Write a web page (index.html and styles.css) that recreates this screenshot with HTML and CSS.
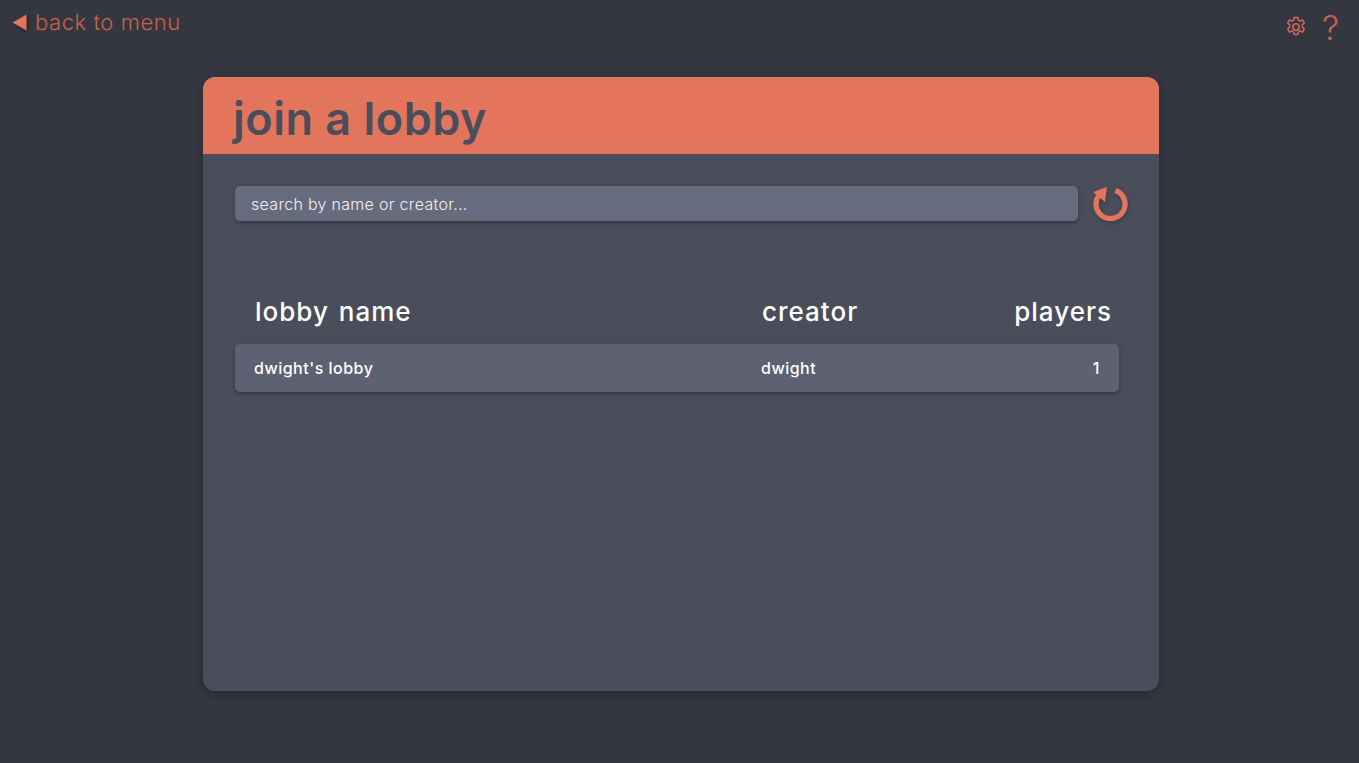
FILE: index.html
```html
<!DOCTYPE html>
<html lang="en">

<head>
    <meta charset="UTF-8">
    <meta name="viewport" content="width=device-width, initial-scale=1.0">
    <title>join a lobby</title>
    <link rel="stylesheet" href="styles.css">
</head>

<body>

    <div class="topbar">
        <a class="back-link">
            <svg class="back-arrow" width="15" height="17" viewBox="0 0 15 17">
                <path d="M14.5 0.5V16.5L0.5 8.5Z" fill="#e2755c" />
            </svg>
            <span>back to menu</span>
        </a>
        <div class="top-icons">
            <svg class="gear" width="22" height="22" viewBox="0 0 22 22" fill="none" stroke="#d0685a" stroke-width="1.5" stroke-linejoin="round">
                <circle cx="11" cy="11" r="3.2" />
                <path d="M9.2 1.5h3.6l.5 2.6 1.8.9 2.4-1.1 1.9 3.2-2 1.6v2.600l2 1.600-1.900 3.200-2.400-1.100-1.800.9-.5 2.600H9.200l-.5-2.600-1.800-.9-2.400 1.100-1.900-3.200 2-1.600V8.700l-2-1.600 1.900-3.200 2.400 1.100 1.800-.9z" />
            </svg>
            <span class="help">?</span>
        </div>
    </div>

    <div class="card">
        <div class="card-head">
            <h1>join a lobby</h1>
        </div>
        <div class="card-body">
            <div class="search-row">
                <input class="search" type="text" placeholder="search by name or creator...">
                <svg class="refresh" width="36" height="35" viewBox="0 0 36 35" fill="none">
                    <path d="M6.500 8.600A14.500 14.500 0 1 0 22.500 4.400" stroke="#e2755c" stroke-width="5.300" />
                    <path d="M0 6L14 1L12 16Z" fill="#e2755c" />
                </svg>
            </div>

            <div class="lobby-head">
                <span class="col-name">lobby name</span>
                <span class="col-creator">creator</span>
                <span class="col-players">players</span>
            </div>
            <div class="lobby-row">
                <span class="col-name">dwight's lobby</span>
                <span class="col-creator">dwight</span>
                <span class="col-players">1</span>
            </div>
        </div>
    </div>

</body>

</html>
```

FILE: styles.css
```css
* {
    margin: 0;
    padding: 0;
    box-sizing: border-box;
}

body {
    height: 100vh;
    overflow: hidden;
    background-color: #343740;
    font-family: "Inter", "Open Sans", sans-serif;
}

.topbar {
    display: flex;
    justify-content: space-between;
    align-items: flex-start;
    height: 77px;
    padding: 0 20px 0 12px;
}

.back-link {
    display: flex;
    align-items: center;
    gap: 8px;
    height: 44px;
    color: #c9614e;
    font-size: 22px;
    font-weight: 300;
    letter-spacing: 0.55px;
}

.back-arrow {
    filter: drop-shadow(1px 2px 2px rgba(0, 0, 0, 0.3));
}

.top-icons {
    display: flex;
    align-items: center;
    gap: 15px;
    height: 54px;
}

.help {
    color: #c9614e;
    font-size: 34px;
    font-weight: 300;
}

.card {
    width: 956px;
    height: 614px;
    margin-left: 203px;
    border-radius: 12px;
    overflow: hidden;
    background-color: #4a4e5a;
    box-shadow: 0 3px 8px rgba(0, 0, 0, 0.25);
}

.card-head {
    height: 77px;
    padding: 0 30px;
    background-color: #e2755c;
}

.card-head h1 {
    color: #4a4e5a;
    font-size: 45px;
    font-weight: 600;
    line-height: 83px;
    letter-spacing: 0.5px;
}

.card-body {
    padding: 32px;
}

.search-row {
    display: flex;
    align-items: center;
    gap: 15px;
    width: 894px;
}

.search {
    width: 843px;
    height: 35px;
    padding: 0 16px;
    border: none;
    border-radius: 5px;
    outline: none;
    background-color: #666b7d;
    color: #fff;
    font-family: inherit;
    font-size: 16px;
    font-weight: 300;
    letter-spacing: 0.3px;
    box-shadow: 0 2px 4px rgba(0, 0, 0, 0.3);
}

.search::placeholder {
    color: #f1f1f1;
    opacity: 1;
}

.refresh {
    filter: drop-shadow(1px 2px 2px rgba(0, 0, 0, 0.2));
}

.lobby-head,
.lobby-row {
    display: flex;
    width: 884px;
    color: #fff;
}

.lobby-head {
    margin-top: 75px;
    padding: 0 7px 0 20px;
    font-size: 26px;
    font-weight: 500;
    line-height: 32px;
    letter-spacing: 1px;
    word-spacing: 2px;
}

.lobby-row {
    align-items: center;
    height: 48px;
    margin-top: 16px;
    padding: 0 19px;
    border-radius: 5px;
    background-color: #5d6172;
    font-size: 16px;
    font-weight: 500;
    letter-spacing: 0.5px;
    box-shadow: 0 2px 4px rgba(0, 0, 0, 0.3);
}

.col-name {
    width: 507px;
}

.col-creator {
    flex: 1;
}

.col-players {
    text-align: right;
}
```
